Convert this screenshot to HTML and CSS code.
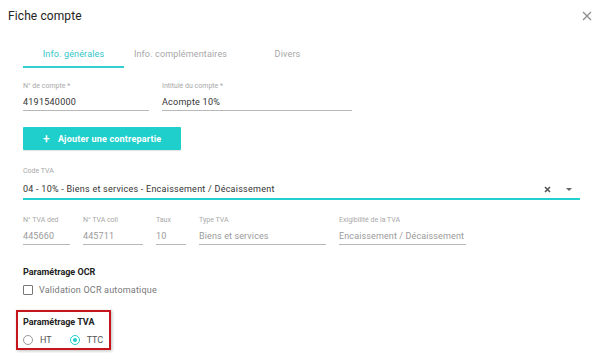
FILE: index.html
```html
<!DOCTYPE html>
<html lang="fr">
<head>
    <meta charset="UTF-8">
    <title>Fiche compte</title>
    <link rel="stylesheet" href="styles.css">
</head>
<body>
    <div class="dialog">
        <div class="dialog-header">
            <h1>Fiche compte</h1>
            <svg class="close-icon" width="10" height="10" viewBox="0 0 10 10">
                <path d="M1 1 L9 9 M9 1 L1 9" stroke="#8a8a8a" stroke-width="1.2" fill="none"/>
            </svg>
        </div>

        <div class="tabs">
            <div class="tab active">Info. générales</div>
            <div class="tab">Info. complémentaires</div>
            <div class="tab">Divers</div>
        </div>

        <div class="content">
            <div class="field-row first-row">
                <div class="field" style="width: 126px;">
                    <label>N° de compte *</label>
                    <div class="value">4191540000</div>
                </div>
                <div class="field" style="width: 190px;">
                    <label>Intitulé du compte *</label>
                    <div class="value">Acompte 10%</div>
                </div>
            </div>

            <button class="add-button"><span class="plus">+</span>Ajouter une contrepartie</button>

            <div class="field select-field">
                <label>Code TVA</label>
                <div class="value">
                    <span>04 - 10% - Biens et services - Encaissement / Décaissement</span>
                    <span class="select-icons">
                        <svg width="7" height="7" viewBox="0 0 7 7">
                            <path d="M1 1 L6 6 M6 1 L1 6" stroke="#555" stroke-width="1.6" fill="none"/>
                        </svg>
                        <svg width="6" height="3" viewBox="0 0 6 3">
                            <path d="M0 0 L6 0 L3 3 Z" fill="#666"/>
                        </svg>
                    </span>
                </div>
            </div>

            <div class="field-row tva-row">
                <div class="field disabled" style="width: 47px;">
                    <label>N° TVA ded</label>
                    <div class="value">445660</div>
                </div>
                <div class="field disabled" style="width: 60px;">
                    <label>N° TVA coll</label>
                    <div class="value">445711</div>
                </div>
                <div class="field disabled" style="width: 30px;">
                    <label>Taux</label>
                    <div class="value">10</div>
                </div>
                <div class="field disabled" style="width: 127px;">
                    <label>Type TVA</label>
                    <div class="value">Biens et services</div>
                </div>
                <div class="field disabled" style="width: 127px;">
                    <label>Exigibilité de la TVA</label>
                    <div class="value">Encaissement / Décaissement</div>
                </div>
            </div>

            <h2 class="section-title">Paramétrage OCR</h2>
            <div class="option-row">
                <span class="checkbox"></span>
                <span class="option-label">Validation OCR automatique</span>
            </div>

            <div class="tva-box">
                <h2 class="section-title">Paramétrage TVA</h2>
                <div class="radio-group">
                    <div class="radio-option">
                        <span class="radio"></span>
                        <span>HT</span>
                    </div>
                    <div class="radio-option">
                        <span class="radio checked"></span>
                        <span>TTC</span>
                    </div>
                </div>
            </div>
        </div>
    </div>
</body>
</html>
```

FILE: styles.css
```css
* {
    margin: 0;
    padding: 0;
    box-sizing: border-box;
    font-family: 'Roboto', 'Liberation Sans', sans-serif;
}

body {
    background-color: white;
    width: 602px;
    height: 353px;
    overflow: hidden;
}

.dialog-header {
    height: 32px;
    padding: 0 10px 0 8px;
    display: flex;
    justify-content: space-between;
    align-items: center;
}

.dialog-header h1 {
    font-size: 12px;
    font-weight: 400;
    color: #222;
    letter-spacing: 0.1px;
}

.tabs {
    display: flex;
    gap: 6px;
    margin: 6px 0 0 23px;
}

.tab {
    width: 101px;
    height: 30px;
    padding-top: 4px;
    display: flex;
    align-items: center;
    justify-content: center;
    font-size: 9px;
    letter-spacing: 0.15px;
    color: #a8a8a8;
    border-bottom: 2px solid transparent;
    white-space: nowrap;
}

.tab.active {
    color: #33c6c8;
    border-bottom-color: #33cfd0;
}

.content {
    padding: 0 22px 0 23px;
}

.field-row {
    display: flex;
    gap: 13px;
}

.first-row {
    margin-top: 14px;
}

.field label {
    display: block;
    font-size: 7px;
    line-height: 9px;
    color: #a8a8a8;
    margin-bottom: 5px;
    white-space: nowrap;
}

.field .value {
    font-size: 9px;
    line-height: 12px;
    letter-spacing: 0.25px;
    color: #333;
    padding-bottom: 2px;
    border-bottom: 1px solid #b8b8b8;
    white-space: nowrap;
}

.field.disabled .value {
    color: #9a9a9a;
    letter-spacing: 0.12px;
}

.add-button {
    display: flex;
    align-items: center;
    margin-top: 16px;
    width: 158px;
    height: 23px;
    border: none;
    border-radius: 1px;
    background-color: #1fcfcc;
    color: white;
    font-size: 9px;
    font-weight: 700;
    letter-spacing: 0.2px;
    padding-left: 20px;
    box-shadow: 0 1px 1px rgba(0, 0, 0, 0.12);
}

.add-button .plus {
    font-size: 12px;
    font-weight: 500;
    margin-right: 8px;
}

.select-field {
    margin-top: 17px;
}

.select-field label {
    margin-bottom: 7px;
}

.select-field .value {
    display: flex;
    justify-content: space-between;
    align-items: center;
    padding-bottom: 3px;
    border-bottom: 2px solid #22d0cf;
}

.select-icons {
    display: flex;
    align-items: center;
    gap: 15px;
    padding-right: 8px;
}

.tva-row {
    margin-top: 16px;
}

.section-title {
    font-size: 9px;
    line-height: 12px;
    font-weight: 700;
    color: #222;
}

.content > .section-title {
    margin-top: 21px;
}

.option-row {
    display: flex;
    align-items: center;
    gap: 6px;
    margin-top: 6px;
    height: 12px;
}

.checkbox {
    width: 10px;
    height: 10px;
    border: 1px solid #777;
    border-radius: 1px;
}

.option-label {
    font-size: 9px;
    letter-spacing: 0.2px;
    color: #777;
}

.tva-box {
    margin: 14px 0 0 -7px;
    width: 95px;
    padding: 4px 5px 2px;
    border: 2px solid #c4161c;
    box-shadow: 1px 1px 3px rgba(0, 0, 0, 0.25);
}

.radio-group {
    display: flex;
    gap: 18px;
    margin-top: 6px;
    height: 12px;
    align-items: center;
}

.radio-option {
    display: flex;
    align-items: center;
    gap: 7px;
    font-size: 9px;
    color: #555;
}

.radio {
    width: 10px;
    height: 10px;
    border: 1px solid #999;
    border-radius: 50%;
    position: relative;
}

.radio.checked {
    border-color: #22cfcf;
}

.radio.checked::after {
    content: '';
    position: absolute;
    top: 2px;
    left: 2px;
    width: 4px;
    height: 4px;
    border-radius: 50%;
    background-color: #22cfcf;
}
```
